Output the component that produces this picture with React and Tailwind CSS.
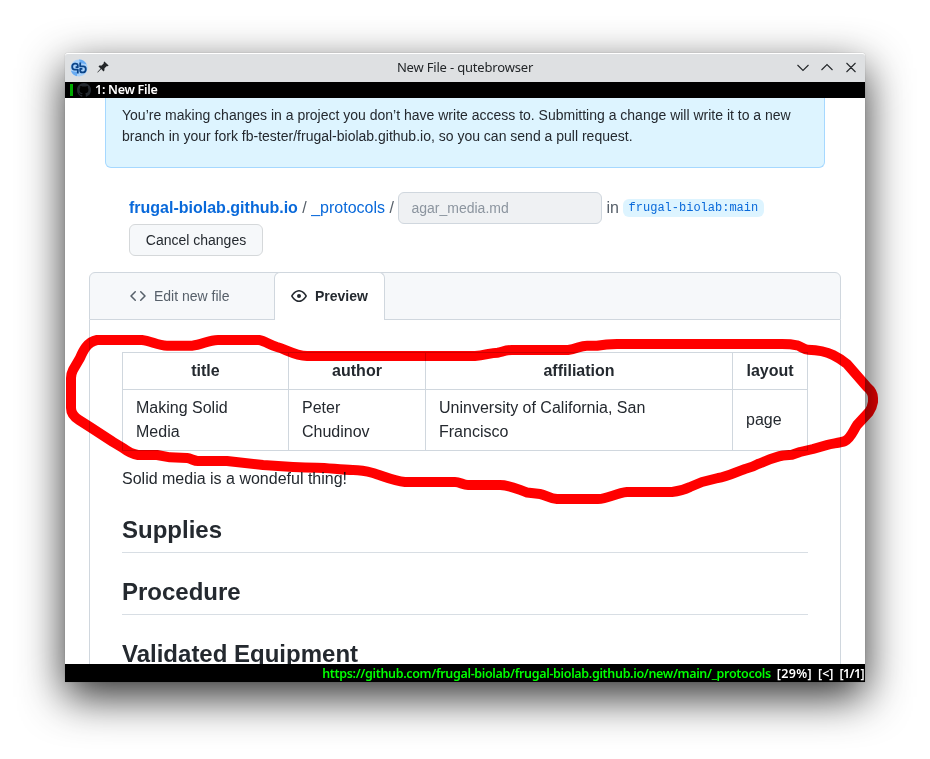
const ui = "font-['Noto_Sans',sans-serif]";

function QuteLogo() {
  return (
    <svg width="18" height="18" viewBox="0 0 18 18">
      <circle cx="9" cy="9" r="8.500" fill="#a9d2fb" />
      <path d="M9 .5a8.500 8.500 0 0 1 7.600 4.700L10 4zM1 12a8.500 8.500 0 0 0 6 5.200V13z" fill="#68abf2" />
      <g fill="none" stroke="#0b4488" strokeWidth="1.800" strokeLinejoin="round">
        <path d="M7.800 14.400V10.600H4.600Q2.200 10.600 2.200 7.800T4.600 4.600H5.600Q7.800 4.600 7.800 6.600V8.200H5.600" />
        <path d="M10.200 3.400V7.400H13.400Q15.800 7.400 15.800 10.200T13.400 13.400H12.400Q10.200 13.400 10.200 11.400V9.800H12.400" />
      </g>
    </svg>
  );
}

function PinIcon() {
  return (
    <svg className="mb-[2px]" width="12" height="12" viewBox="0 0 12 12" fill="#232629">
      <path d="M7.4.4 11.6 4.4 10.8 5.3 9.9 5 7.5 7.3 7.4 9.6 6.5 10.4 4.2 8.1.8 11.6.3 11.2 3.6 7.5 1.5 5.4 2.4 4.5 4.7 4.5 7 2.1 6.6 1.2z" />
    </svg>
  );
}

function GithubMark() {
  return (
    <svg width="14" height="14" viewBox="0 0 16 16" fill="#24292f">
      <path d="M8 0C3.58 0 0 3.58 0 8c0 3.54 2.29 6.53 5.47 7.59.4.07.55-.17.55-.38 0-.19-.01-.82-.01-1.49-2.01.37-2.53-.49-2.69-.94-.09-.23-.48-.94-.82-1.13-.28-.15-.68-.52-.01-.53.63-.01 1.08.58 1.23.82.72 1.21 1.87.87 2.33.66.07-.52.28-.87.51-1.07-1.78-.2-3.64-.89-3.64-3.95 0-.87.31-1.59.82-2.15-.08-.2-.36-1.02.08-2.12 0 0 .67-.21 2.2.82.64-.18 1.32-.27 2-.27s1.36.09 2 .27c1.53-1.04 2.2-.82 2.2-.82.44 1.1.16 1.92.08 2.12.51.56.82 1.27.82 2.15 0 3.07-1.87 3.75-3.65 3.95.29.25.54.73.54 1.48 0 1.07-.01 1.93-.01 2.2 0 .21.15.46.55.38A8.01 8.01 0 0 0 16 8c0-4.42-3.58-8-8-8z" />
    </svg>
  );
}

function TitleBar() {
  return (
    <div className={`flex h-[29px] items-center justify-between rounded-t-[3px] border-t border-white bg-[#dee0e2] pb-px pl-[5px] pr-[8px] text-[#232629] ${ui}`}>
      <div className="flex w-[60px] items-center gap-[9px]">
        <QuteLogo />
        <PinIcon />
      </div>
      <span className="mb-[2px] pl-[3px] text-center text-[13px] leading-[18px] tracking-[-0.180px]">New File - qutebrowser</span>
      <svg width="60" height="12" viewBox="0 0 60 12" fill="none" stroke="#232629" strokeWidth="1.1">
        <path d="M.5 3 6 8.500l5.500-5.500M24.500 8 30 2.500l5.500 5.500M49.500 1l9 9M58.500 1l-9 9" />
      </svg>
    </div>
  );
}

function EditorTabs() {
  return (
    <div className="flex h-[48px] rounded-t-[6px] border border-[#d0d7de] bg-[#f6f8fa] text-[14px]">
      <div className="flex w-[184px] items-center gap-2 pl-[40px] text-[#57606a]">
        <svg width="16" height="16" viewBox="0 0 16 16" fill="currentColor">
          <path d="M4.72 3.22a.75.75 0 011.06 1.06L2.06 8l3.72 3.72a.75.75 0 11-1.06 1.06L.47 8.53a.75.75 0 010-1.06l4.25-4.25zm6.56 0a.75.75 0 10-1.06 1.06L13.940 8l-3.720 3.720a.75.75 0 101.060 1.060l4.250-4.250a.75.75 0 000-1.060l-4.250-4.250z" />
        </svg>
        Edit new file
      </div>
      <div className="-mt-px flex h-[48px] w-[111px] items-center gap-2 rounded-t-[6px] border border-b-0 border-[#d0d7de] bg-white pb-[2px] pl-[16px] font-bold">
        <svg width="16" height="16" viewBox="0 0 16 16" fill="currentColor">
          <path d="M1.679 7.932c.412-.621 1.242-1.75 2.366-2.717C5.175 4.242 6.527 3.5 8 3.5c1.473 0 2.824.742 3.955 1.715 1.124.967 1.954 2.096 2.366 2.717a.119.119 0 010 .136c-.412.621-1.242 1.75-2.366 2.717C10.825 11.758 9.473 12.5 8 12.5c-1.473 0-2.824-.742-3.955-1.715C2.92 9.818 2.09 8.69 1.679 8.068a.119.119 0 010-.136zM8 2c-1.981 0-3.67.992-4.933 2.078C1.797 5.169.88 6.423.43 7.1a1.619 1.619 0 000 1.798c.45.678 1.367 1.932 2.637 3.024C4.329 13.008 6.019 14 8 14c1.981 0 3.67-.992 4.933-2.078 1.27-1.091 2.187-2.345 2.637-3.023a1.619 1.619 0 000-1.798c-.45-.678-1.367-1.932-2.637-3.023C11.671 2.992 9.981 2 8 2zm0 8a2 2 0 100-4 2 2 0 000 4z" />
        </svg>
        Preview
      </div>
    </div>
  );
}

const cell = "border border-[#d0d7de] px-[13px] py-[6px]";

function FrontMatter() {
  return (
    <table className="w-[686px] table-fixed border-collapse text-left">
      <colgroup>
        <col className="w-[166px]" />
        <col className="w-[137px]" />
        <col className="w-[307px]" />
        <col className="w-[75px]" />
      </colgroup>
      <thead>
        <tr className="text-center">
          {["title", "author", "affiliation", "layout"].map((h) => (
            <th key={h} className={`${cell} text-center font-bold`}>{h}</th>
          ))}
        </tr>
      </thead>
      <tbody>
        <tr>
          <td className={cell}>Making Solid<br />Media</td>
          <td className={cell}>Peter<br />Chudinov</td>
          <td className={cell}>Uninversity of California, San<br />Francisco</td>
          <td className={cell}>page</td>
        </tr>
      </tbody>
    </table>
  );
}

function Heading({ children }) {
  return <h2 className="h-[38px] border-b border-[#d8dee4] text-[24px] font-bold leading-[30px]">{children}</h2>;
}

function Page() {
  return (
    <div className="h-[566px] overflow-hidden bg-white px-[24px] font-['Liberation_Sans',Arial,sans-serif] text-[16px] leading-6 text-[#24292f]">
      <div className="mx-[16px] h-[70px] rounded-b-[6px] border border-t-0 border-[#a6d8ff] bg-[#ddf4ff] pl-[16px] pt-[7px] text-[14px] leading-[21px]">
        You’re making changes in a project you don’t have write access to. Submitting a change will write it to a new
        <br />
        branch in your fork fb-tester/frugal-biolab.github.io, so you can send a pull request.
      </div>

      <div className="ml-[40px] mt-[24px] flex h-[32px] items-center whitespace-nowrap text-[#57606a]">
        <span className="font-bold text-[#0969da]">frugal-biolab.github.io</span>
        <span className="mx-[4.450px]">/</span>
        <span className="text-[#0969da]">_protocols</span>
        <span className="ml-[4.400px]">/</span>
        <div className="ml-[4.200px] mr-[4.400px] flex h-[32px] w-[204px] items-center rounded-[6px] border border-[#d0d7de] bg-[#eff1f3] pl-[12.400px] text-[14px] text-[#8c959f]">agar_media.md</div>
        <span>in</span>
        <span className="ml-[4px] flex h-[18px] items-center rounded-[6px] bg-[#ddf4ff] px-[5.700px] font-['Liberation_Mono',monospace] text-[12px] text-[#0969da]">frugal-biolab:main</span>
      </div>
      <div className="ml-[40px] flex h-[32px] w-[134px] items-center justify-center rounded-[6px] border border-[#d5d8da] bg-[#f6f8fa] text-[14px]">Cancel changes</div>

      <div className="mt-[16px] w-[752px]">
        <EditorTabs />
        <div className="h-[500px] border-x border-[#d0d7de] px-[32px] pt-[32px]">
          <FrontMatter />
          <p className="mb-6 mt-[16px]">Solid media is a wondeful thing!</p>
          <div className="flex flex-col gap-6">
            <Heading>Supplies</Heading>
            <Heading>Procedure</Heading>
            <Heading>Validated Equipment</Heading>
          </div>
        </div>
      </div>
    </div>
  );
}

// Hand-drawn highlighter loop around the front matter table.
const loop =
  "M97 340H142C151 341 158 345.700 167 345.700H192C202 345 208 340 218 340H259C265 341 270 345 277 347C285 349 295 355.700 307 356H475C485 355.500 490 352.700 498 352.700C503 351.500 506 350 512 350H568C577 349 580 345.700 587 345.700H597Q606 344.300 617 344H782Q791 344 797 345.300C801 346.500 804 349.700 808 349.700C820 350 827 352 833 355Q841 359 847 364L867 387Q873 392 873 398V402Q872 408 869 412L857 425C853 431 851 438 845 441C840 443 832 443.500 827 445L813 449L800 452L792 454.700L783 455.500C774 457 766 461 758 464C753 467 749 468 745 469C736 472 727 477 718 478L702 482L690 487Q682 491 672 492H627C616 493 608 499 598 499H557C550 498.500 546 495 540 494L527 492.500C517 489 510 485 500 485H468C463 485 460 482 455 482H405C394 481 383 476 373 473Q362 470 353 470C340 470 329 467.700 317 467.700Q305 467.700 293 467L263 465L227 461H198C194 461 191 458.500 187 458L170 457.300L157 455H138Q131 454 123 448L113 442L90 427L79 420Q71 415 71 408V378Q71 374 73 370L80 358C83 351 87 342 97 340Z";

export default function App() {
  return (
    <div className="relative h-[759px] w-[930px] overflow-hidden bg-white pl-[65px] pt-[53px]">
      <div className="w-[800px] rounded-t-[3px] shadow-[0_15px_44px_rgba(0,0,0,0.820),0_0_1px_rgba(0,0,0,0.400)]">
        <TitleBar />
        <div className={`flex h-[16px] items-center bg-black pl-[5px] text-[12.500px] font-semibold tracking-[-0.270px] text-white ${ui}`}>
          <span className="h-[12px] w-[3px] bg-[#00aa00]" />
          <span className="ml-[4px] mr-[4px]"><GithubMark /></span>
          1: New File
        </div>
        <Page />
        <div className={`flex h-[18px] items-center justify-end gap-[6px] whitespace-nowrap bg-black pr-px pt-[2px] text-[12.500px] font-semibold leading-[16px] text-white ${ui}`}>
          <span className="tracking-[-0.335px] text-[#00ff00]">https://github.com/frugal-biolab/frugal-biolab.github.io/new/main/_protocols</span>
          <span className="tracking-[0.350px]">[29%]</span>
          <span>[&lt;]</span>
          <span className="tracking-[-0.600px]">[1/1]</span>
        </div>
      </div>
      <svg className="pointer-events-none absolute left-0 top-0 mix-blend-multiply" width="930" height="759" viewBox="0 0 930 759">
        <path d={loop} fill="none" stroke="#ff0000" strokeWidth="10" strokeLinejoin="round" />
      </svg>
    </div>
  );
}
